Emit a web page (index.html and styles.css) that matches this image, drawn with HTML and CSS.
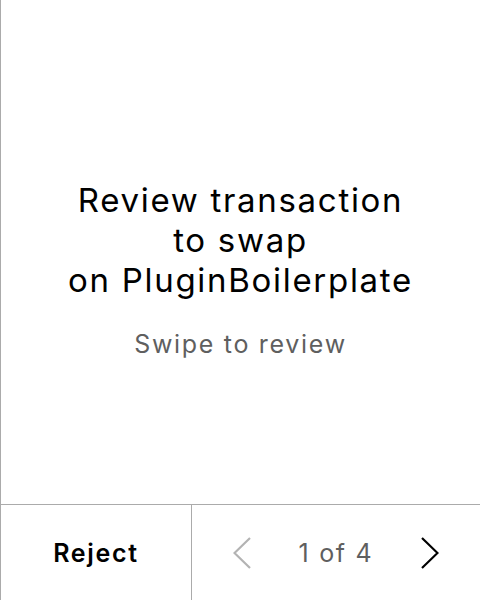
FILE: index.html
```html
<!DOCTYPE html>
<html>
<head>
<meta charset="utf-8">
<link rel="stylesheet" href="styles.css">
</head>
<body>
<div class="screen">
  <main class="content">
    <h1 class="title">Review transaction<br>to swap<br>on PluginBoilerplate</h1>
    <p class="subtitle">Swipe to review</p>
  </main>
  <footer class="footer">
    <button class="reject">Reject</button>
    <div class="pager">
      <svg class="chev" width="18" height="32" viewBox="0 0 18 32"><path d="M17 1 L1.5 16 L17 31" fill="none" stroke="#b3b3b3" stroke-width="2.2"/></svg>
      <span class="count">1 of 4</span>
      <svg class="chev" width="18" height="32" viewBox="0 0 18 32"><path d="M1 1 L16.5 16 L1 31" fill="none" stroke="#000" stroke-width="2.2"/></svg>
    </div>
  </footer>
</div>
</body>
</html>
```
FILE: styles.css
```css
html, body {
  margin: 0;
  padding: 0;
  background: #fff;
}
.screen {
  width: 480px;
  height: 600px;
  display: flex;
  flex-direction: column;
  border-left: 1px solid #ababab;
  box-sizing: border-box;
  font-family: Inter, "Noto Sans", sans-serif;
  color: #000;
  letter-spacing: 1.7px;
}
.content {
  flex: 1;
  display: flex;
  flex-direction: column;
  align-items: center;
  justify-content: center;
  padding-top: 36px;
}
.title {
  margin: 0;
  font-size: 33px;
  font-weight: 400;
  line-height: 40px;
  text-align: center;
}
.subtitle {
  margin: 28px 0 0;
  font-size: 25px;
  line-height: 32px;
  color: #5f5f5f;
}
.footer {
  height: 95px;
  flex: none;
  border-top: 1px solid #ababab;
  display: grid;
  grid-template-columns: 191px 1fr;
}
.reject {
  border: none;
  border-right: 1px solid #ababab;
  background: none;
  font-family: inherit;
  letter-spacing: inherit;
  font-size: 25px;
  font-weight: 600;
  color: #000;
  padding: 0;
}
.pager {
  display: flex;
  align-items: center;
  justify-content: space-between;
  padding: 0 41px;
}
.count {
  font-size: 25px;
  color: #5f5f5f;
}
```
